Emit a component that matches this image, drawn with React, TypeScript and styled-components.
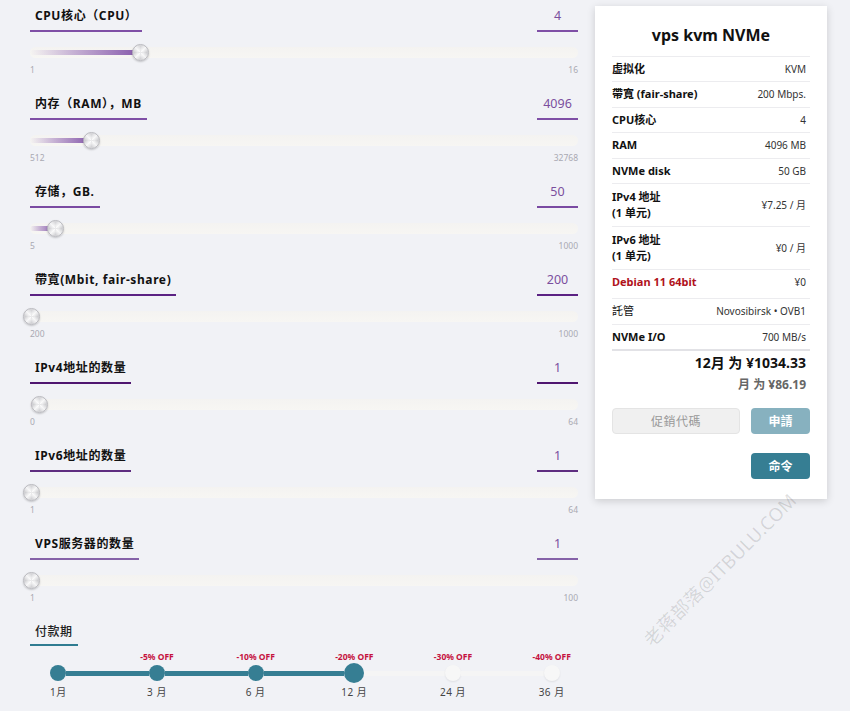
import React from "react";
import styled, { createGlobalStyle } from "styled-components";

const Global = createGlobalStyle`
  html, body { margin: 0; padding: 0; background: #f1f2f6; }
  body { font-family: "Noto Sans", "Noto Sans CJK SC", sans-serif; color: #111; }
  * { box-sizing: border-box; }
`;

const Page = styled.div`
  position: relative;
  display: flex;
  align-items: flex-start;
  gap: 17px;
  padding-left: 30px;
  width: 850px;
  height: 711px;
  overflow: hidden;
`;

const LeftCol = styled.div`
  width: 548px;
  display: flex;
  flex-direction: column;
`;

const Row = styled.div`
  height: 88px;
  display: flex;
  flex-direction: column;
`;

const Header = styled.div`
  display: flex;
  justify-content: space-between;
  align-items: flex-end;
`;

const Label = styled.div<{ $line: string; $pb?: number }>`
  padding: 6px 5px ${(p) => (p.$pb ?? 4)}px;
  font-size: 12px;
  line-height: 20px;
  font-weight: 700;
  letter-spacing: 0.6px;
  color: #111;
  border-bottom: 2px solid ${(p) => p.$line};
`;

const PeriodLabel = styled(Label)`
  font-weight: 500;
  letter-spacing: 0.5px;
  color: #222;
`;

const ValueBox = styled.div<{ $line: string }>`
  width: 41px;
  padding: 6px 0 4px;
  font-size: 12.5px;
  line-height: 20px;
  text-align: center;
  color: #7b4f9e;
  border-bottom: 2px solid ${(p) => p.$line};
`;

const SliderWrap = styled.div`
  margin-top: 12px;
  height: 16px;
  position: relative;
  display: flex;
  align-items: center;
`;

const Track = styled.div`
  width: 100%;
  height: 11px;
  border-radius: 6px;
  background: linear-gradient(to bottom, #f4f3f1, #f7f6f3);
  display: flex;
  align-items: center;
`;

const Fill = styled.div`
  height: 5px;
  border-radius: 3px;
  background: linear-gradient(to right, rgba(140, 95, 175, 0) 0%, rgba(140, 95, 175, 0.45) 40%, #8659ab 100%);
`;

const Thumb = styled.div`
  position: absolute;
  top: -0.5px;
  width: 17px;
  height: 17px;
  margin-left: -8.5px;
  border-radius: 50%;
  border: 1px solid #b9b9be;
  background:
    radial-gradient(circle, rgba(255,255,255,0.5) 0 3px, rgba(255,255,255,0) 6px),
    conic-gradient(#d6d6d9, #f6f6f7, #cfcfd2, #f4f4f5, #d3d3d6, #f7f7f8, #d0d0d3, #f5f5f6, #d6d6d9);
  box-shadow: 0 1px 2px rgba(0, 0, 0, 0.2);
`;

const Range = styled.div`
  margin-top: 4px;
  display: flex;
  justify-content: space-between;
  font-size: 8.5px;
  line-height: 12px;
  color: #a9a9b2;
`;

const Discounts = styled.div`
  margin-top: 5px;
  margin-left: -21px;
  width: 592px;
  display: grid;
  grid-template-columns: repeat(6, 1fr);
`;

const Stop = styled.div`
  display: flex;
  flex-direction: column;
  align-items: stretch;
`;

const Off = styled.div`
  height: 12px;
  font-size: 8.5px;
  line-height: 12px;
  font-weight: 700;
  color: #c5123f;
  text-align: center;
`;

const DotRow = styled.div`
  height: 20px;
  display: flex;
  align-items: center;
`;

const Seg = styled.div<{ $on: boolean; $hide?: boolean }>`
  flex: 1;
  height: 5px;
  background: ${(p) => (p.$hide ? "transparent" : p.$on ? "#367e93" : "#f5f5f5")};
`;

const Dot = styled.div<{ $on: boolean; $big: boolean }>`
  width: ${(p) => (p.$big ? 20 : 16)}px;
  height: ${(p) => (p.$big ? 20 : 16)}px;
  border-radius: 50%;
  background: ${(p) => (p.$on ? "#367e93" : "#f7f7f7")};
  box-shadow: ${(p) => (p.$on ? "none" : "0 1px 2px rgba(0,0,0,0.08)")};
`;

const Month = styled.div`
  margin-top: 2px;
  font-size: 10px;
  line-height: 14px;
  color: #444;
  text-align: center;
  letter-spacing: 0.5px;
`;

const Card = styled.div`
  margin-top: 6px;
  width: 232px;
  background: #fff;
  padding: 18px 17px 20px;
  box-shadow: 0 2px 8px rgba(0, 0, 0, 0.16);
  display: flex;
  flex-direction: column;
`;

const Title = styled.div`
  font-size: 16px;
  line-height: 22px;
  font-weight: 700;
  text-align: center;
  color: #111;
  margin-bottom: 10px;
`;

const Spec = styled.div<{ $tall?: boolean; $extra?: number }>`
  display: flex;
  justify-content: space-between;
  align-items: ${(p) => (p.$tall ? "center" : "flex-start")};
  border-top: 1px solid #ececef;
  padding: 5px 4px ${(p) => 5 + (p.$extra ?? 0)}px 0;
  line-height: ${(p) => (p.$tall ? 16 : 14.4)}px;
`;

const SpecKey = styled.div<{ $red?: boolean; $light?: boolean }>`
  font-size: 11px;
  font-weight: ${(p) => (p.$light ? 400 : 700)};
  color: ${(p) => (p.$red ? "#b0121b" : "#111")};
`;

const SpecVal = styled.div`
  font-size: 10px;
  color: #333;
  text-align: right;
`;

const Totals = styled.div`
  border-top: 2px solid #e2e2e6;
  padding: 2px 4px 0 0;
  display: flex;
  flex-direction: column;
  align-items: flex-end;
`;

const Total = styled.div`
  font-size: 14px;
  line-height: 20px;
  font-weight: 700;
  color: #111;
`;

const PerMonth = styled.div`
  margin-top: 3px;
  font-size: 12px;
  line-height: 18px;
  font-weight: 700;
  color: #666;
`;

const PromoRow = styled.div`
  margin-top: 14px;
  display: flex;
  gap: 11px;
`;

const Promo = styled.div`
  width: 128px;
  height: 26px;
  border: 1px solid #e4e4e4;
  border-radius: 4px;
  background: #f0f0f0;
  color: #999;
  font-size: 12px;
  display: flex;
  align-items: center;
  justify-content: center;
  letter-spacing: 0.5px;
`;

const Btn = styled.div<{ $dark?: boolean }>`
  width: 59px;
  height: 26px;
  border-radius: 4px;
  background: ${(p) => (p.$dark ? "#367e93" : "#87b1bf")};
  color: #fff;
  font-size: 12px;
  font-weight: 700;
  display: flex;
  align-items: center;
  justify-content: center;
`;

const OrderRow = styled.div`
  margin-top: 19px;
  display: flex;
  justify-content: flex-end;
`;

const Watermark = styled.div`
  position: absolute;
  left: 616px;
  top: 556px;
  transform: rotate(-45deg);
  font-size: 18.5px;
  color: rgba(0, 0, 0, 0.12);
  white-space: nowrap;
  letter-spacing: 0.3px;
  pointer-events: none;
`;

type Slider = { label: string; value: string; min: number; max: number; v: number; line: string };

const sliders: Slider[] = [
  { label: "CPU核心（CPU）", value: "4", min: 1, max: 16, v: 4, line: "#7f4fa6" },
  { label: "内存（RAM），MB", value: "4096", min: 512, max: 32768, v: 4096, line: "#7f4fa6" },
  { label: "存储，GB.", value: "50", min: 5, max: 1000, v: 50, line: "#7a4aa2" },
  { label: "帶寬(Mbit, fair-share)", value: "200", min: 200, max: 1000, v: 200, line: "#5b2283" },
  { label: "IPv4地址的数量", value: "1", min: 0, max: 64, v: 1, line: "#4f1670" },
  { label: "IPv6地址的数量", value: "1", min: 1, max: 64, v: 1, line: "#5e2d80" },
  { label: "VPS服务器的数量", value: "1", min: 1, max: 100, v: 1, line: "#8562a8" },
];

const periods = [
  { off: "", m: "1月" },
  { off: "-5% OFF", m: "3 月" },
  { off: "-10% OFF", m: "6 月" },
  { off: "-20% OFF", m: "12 月" },
  { off: "-30% OFF", m: "24 月" },
  { off: "-40% OFF", m: "36 月" },
];
const SEL = 3;

const specs: { k: React.ReactNode; v: React.ReactNode; tall?: boolean; red?: boolean; light?: boolean; extra?: number }[] = [
  { k: "虚拟化", v: "KVM" },
  { k: "帶寬 (fair-share)", v: "200 Mbps." },
  { k: "CPU核心", v: "4" },
  { k: "RAM", v: "4096 MB" },
  { k: "NVMe disk", v: "50 GB" },
  { k: <>IPv4 地址<br />(1 单元)</>, v: "¥7.25 / 月", tall: true },
  { k: <>IPv6 地址<br />(1 单元)</>, v: "¥0 / 月", tall: true },
  { k: "Debian 11 64bit", v: "¥0", red: true, extra: 4 },
  { k: "託管", v: "Novosibirsk • OVB1", light: true },
  { k: "NVMe I/O", v: "700 MB/s" },
];

export default function App() {
  return (
    <>
      <Global />
      <Page>
        <LeftCol>
          {sliders.map((s) => {
            const frac = (s.v - s.min) / (s.max - s.min);
            return (
              <Row key={s.label}>
                <Header>
                  <Label $line={s.line}>{s.label}</Label>
                  <ValueBox $line={s.line}>{s.value}</ValueBox>
                </Header>
                <SliderWrap>
                  <Track>
                    <Fill style={{ width: `${frac * 100}%` }} />
                  </Track>
                  <Thumb style={{ left: `calc(${frac * 100}% + 1px)` }} />
                </SliderWrap>
                <Range>
                  <span>{s.min}</span>
                  <span>{s.max}</span>
                </Range>
              </Row>
            );
          })}
          <Header>
            <PeriodLabel $line="#2f7c91" $pb={2}>付款期</PeriodLabel>
          </Header>
          <Discounts>
            {periods.map((p, i) => (
              <Stop key={p.m}>
                <Off>{p.off}</Off>
                <DotRow>
                  <Seg $on={i <= SEL} $hide={i === 0} />
                  <Dot $on={i <= SEL} $big={i === SEL} />
                  <Seg $on={i < SEL} $hide={i === periods.length - 1} />
                </DotRow>
                <Month>{p.m}</Month>
              </Stop>
            ))}
          </Discounts>
        </LeftCol>
        <Card>
          <Title>vps kvm NVMe</Title>
          {specs.map((s, i) => (
            <Spec key={i} $tall={s.tall} $extra={s.extra}>
              <SpecKey $red={s.red} $light={s.light}>{s.k}</SpecKey>
              <SpecVal>{s.v}</SpecVal>
            </Spec>
          ))}
          <Totals>
            <Total>12月 为 ¥1034.33</Total>
            <PerMonth>月 为 ¥86.19</PerMonth>
          </Totals>
          <PromoRow>
            <Promo>促銷代碼</Promo>
            <Btn>申請</Btn>
          </PromoRow>
          <OrderRow>
            <Btn $dark>命令</Btn>
          </OrderRow>
        </Card>
        <Watermark>老蒋部落@ITBULU.COM</Watermark>
      </Page>
    </>
  );
}
